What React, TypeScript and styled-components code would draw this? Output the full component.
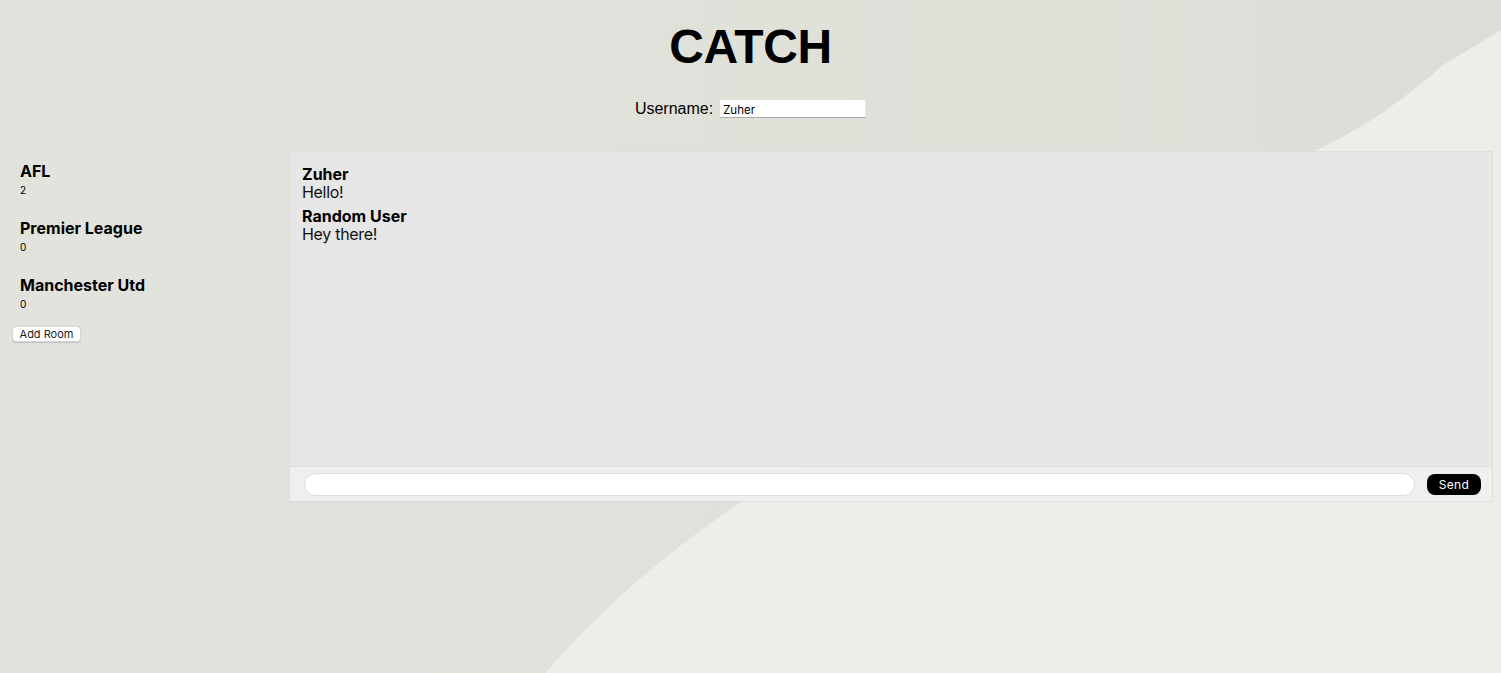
import React from "react";
import styled, { createGlobalStyle } from "styled-components";

const bgSvg = `<svg xmlns='http://www.w3.org/2000/svg' viewBox='0 0 1501 673' preserveAspectRatio='none'><defs><linearGradient id='g' x1='0' y1='0' x2='1' y2='0'><stop offset='0' stop-color='#e1e3dc'/><stop offset='0.7' stop-color='#dfe1d9'/><stop offset='1' stop-color='#dcddd6'/></linearGradient></defs><rect width='1501' height='673' fill='url(#g)'/><path d='M545 673 C610 600 670 550 740 503 C900 410 1100 250 1317 150 C1380 120 1420 85 1443 65 L1501 30 L1501 673 Z' fill='#eceee8'/></svg>`;

const GlobalStyle = createGlobalStyle`
  html, body {
    margin: 0;
    padding: 0;
  }
  body {
    min-height: 100vh;
    background-color: #e0e2da;
    background-image: url("data:image/svg+xml,${encodeURIComponent(bgSvg)}");
    background-size: 100% 100%;
    background-repeat: no-repeat;
    font-family: "Liberation Sans", Arial, sans-serif;
    color: #000;
  }
`;

const Page = styled.div`
  padding: 0 8px;
  min-height: 673px;
  box-sizing: border-box;
`;

const Header = styled.header`
  display: flex;
  flex-direction: column;
  align-items: center;
`;

const Title = styled.h1`
  margin: 19px 0 0;
  font-family: "Liberation Sans", Arial, sans-serif;
  font-weight: 700;
  font-size: 48px;
  line-height: 56px;
  letter-spacing: -0.4px;
`;

const UserRow = styled.label`
  display: flex;
  align-items: center;
  gap: 7px;
  margin-top: 25px;
  font-size: 16px;
  line-height: 18px;
`;

const UserInput = styled.input`
  width: 146px;
  height: 18px;
  box-sizing: border-box;
  border: none;
  border-bottom: 1px solid #a9a9a9;
  border-right: 1px solid #e4e4e4;
  background: #fff;
  padding: 2px 3px 0;
  font-family: Inter, "Noto Sans", sans-serif;
  font-size: 11.5px;
  color: #000;
  outline: none;
`;

const Main = styled.main`
  display: flex;
  margin-top: 33px;
`;

const Sidebar = styled.aside`
  width: 281px;
  flex: none;
  padding: 0 4px;
  box-sizing: border-box;
  font-family: Inter, "Noto Sans", sans-serif;
`;

const Room = styled.div`
  padding: 11px 8px;
`;

const RoomName = styled.div`
  font-size: 16px;
  font-weight: 700;
  line-height: 20px;
  margin-bottom: 3px;
  margin-top: -1px;
`;

const RoomCount = styled.div`
  font-size: 10px;
  line-height: 12px;
  margin-bottom: 1px;
`;

const AddButton = styled.button`
  margin-top: 3px;
  height: 16px;
  width: 69px;
  padding: 0;
  background: #fff;
  border: 1px solid #d6d6d6;
  border-radius: 4px;
  box-shadow: 0 0.5px 1px rgba(0, 0, 0, 0.15);
  font-family: Inter, "Noto Sans", sans-serif;
  font-size: 11px;
  line-height: 14px;
  color: #222;
`;

const ChatPanel = styled.section`
  flex: 1;
  height: 351px;
  box-sizing: border-box;
  display: flex;
  flex-direction: column;
  border: 1px solid #dedede;
  background: rgba(230, 230, 230, 0.96);
`;

const Messages = styled.div`
  flex: 1;
  padding: 13px 12px;
  display: flex;
  flex-direction: column;
  gap: 6px;
  font-family: Inter, "Noto Sans", sans-serif;
`;

const Message = styled.div`
  display: flex;
  flex-direction: column;
`;

const Author = styled.div`
  font-size: 16px;
  font-weight: 700;
  line-height: 18px;
`;

const Body = styled.div`
  font-size: 16px;
  line-height: 18px;
  letter-spacing: -0.3px;
  color: #111;
`;

const Composer = styled.form`
  height: 35px;
  box-sizing: border-box;
  display: flex;
  align-items: center;
  gap: 12px;
  padding: 0 11px 0 14px;
  background: #efefef;
  border-top: 1px solid #e0e0e0;
`;

const ChatInput = styled.input`
  flex: 1;
  height: 23px;
  box-sizing: border-box;
  border: 1px solid #dcdcdc;
  border-radius: 999px;
  background: #fff;
  outline: none;
  padding: 0 12px;
  font-family: Inter, "Noto Sans", sans-serif;
`;

const SendButton = styled.button`
  width: 54px;
  height: 21px;
  padding: 0;
  border: none;
  border-radius: 8px;
  background: #000;
  color: #fff;
  font-family: Inter, "Noto Sans", sans-serif;
  font-size: 12px;
  letter-spacing: 0.3px;
`;

const rooms = [
  { name: "AFL", count: 2 },
  { name: "Premier League", count: 0 },
  { name: "Manchester Utd", count: 0 },
];

const messages = [
  { author: "Zuher", text: "Hello!" },
  { author: "Random User", text: "Hey there!" },
];

export default function App() {
  return (
    <>
      <GlobalStyle />
      <Page>
        <Header>
          <Title>CATCH</Title>
          <UserRow>
            Username:
            <UserInput defaultValue="Zuher" />
          </UserRow>
        </Header>
        <Main>
          <Sidebar>
            {rooms.map((r) => (
              <Room key={r.name}>
                <RoomName>{r.name}</RoomName>
                <RoomCount>{r.count}</RoomCount>
              </Room>
            ))}
            <AddButton type="button">Add Room</AddButton>
          </Sidebar>
          <ChatPanel>
            <Messages>
              {messages.map((m, i) => (
                <Message key={i}>
                  <Author>{m.author}</Author>
                  <Body>{m.text}</Body>
                </Message>
              ))}
            </Messages>
            <Composer onSubmit={(e) => e.preventDefault()}>
              <ChatInput />
              <SendButton type="submit">Send</SendButton>
            </Composer>
          </ChatPanel>
        </Main>
      </Page>
    </>
  );
}
